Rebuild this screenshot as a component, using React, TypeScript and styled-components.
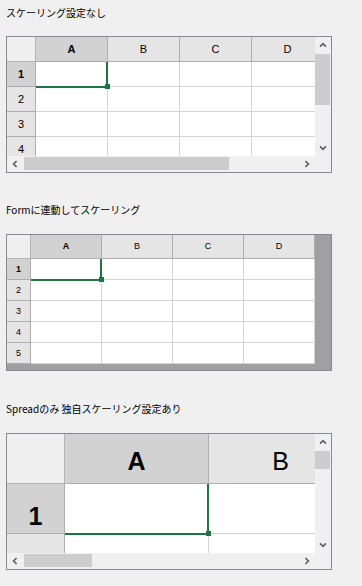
import React from 'react';
import styled, { createGlobalStyle } from 'styled-components';

const GlobalStyle = createGlobalStyle`
  html, body {
    margin: 0;
    padding: 0;
    background: #f0f0f0;
  }
  body {
    width: 362px;
    height: 586px;
    overflow: hidden;
    font-family: "Liberation Sans", "Noto Sans CJK JP", sans-serif;
  }
`;

const GREEN = '#217346';

const Page = styled.div`
  display: flex;
  flex-direction: column;
  padding-left: 6px;
  width: 326px;
`;

const Section = styled.section<{ $top: number; $gap: number }>`
  display: flex;
  flex-direction: column;
  gap: ${(p) => p.$gap}px;
  margin-top: ${(p) => p.$top}px;
`;

const Title = styled.div`
  font-family: "Noto Sans CJK JP", sans-serif;
  font-size: 10px;
  line-height: 14px;
  height: 14px;
  color: #000;
  white-space: nowrap;
`;

const Panel = styled.div<{ $scroll: boolean }>`
  display: grid;
  grid-template-columns: ${(p) => (p.$scroll ? '308px 16px' : '324px')};
  grid-template-rows: ${(p) => (p.$scroll ? '119px 16px' : '135px')};
  border: 1px solid #868a91;
  background: #f0f0f0;
`;

const Sheet = styled.div<{ $bg: string }>`
  overflow: hidden;
  background: ${(p) => p.$bg};
`;

const CellGrid = styled.div<{ $rowHead: number; $colW: number; $cols: number; $headH: number; $rowH: number }>`
  display: grid;
  grid-template-columns: ${(p) => `${p.$rowHead}px repeat(${p.$cols}, ${p.$colW}px)`};
  grid-template-rows: ${(p) => `${p.$headH}px`};
  grid-auto-rows: ${(p) => `${p.$rowH}px`};
  width: max-content;
`;

const Corner = styled.div`
  box-sizing: border-box;
  background: #efefef;
  border-right: 1px solid #b4b4b4;
  border-bottom: 1px solid #b4b4b4;
`;

const HeaderCell = styled.div<{ $selected: boolean; $size: number; $shift: number }>`
  box-sizing: border-box;
  display: flex;
  align-items: center;
  justify-content: center;
  padding-top: ${(p) => p.$shift}px;
  background: ${(p) => (p.$selected ? '#d2d2d2' : '#e5e5e5')};
  border-right: 1px solid #aeaeae;
  border-bottom: 1px solid #aeaeae;
  font-family: "Liberation Sans", sans-serif;
  font-size: ${(p) => p.$size}px;
  font-weight: ${(p) => (p.$selected ? 700 : 400)};
  color: #000;
  line-height: 1;
`;

const DataCell = styled.div`
  position: relative;
  box-sizing: border-box;
  background: #fff;
  border-right: 1px solid #d4d4d4;
  border-bottom: 1px solid #d4d4d4;
`;

const SelectionFrame = styled.div`
  position: absolute;
  z-index: 2;
  left: 0;
  top: 0;
  right: -1px;
  bottom: -2px;
  box-sizing: border-box;
  border-right: 2px solid ${GREEN};
  border-bottom: 2px solid ${GREEN};
`;

const FillHandle = styled.div`
  position: absolute;
  z-index: 3;
  right: -3px;
  bottom: -3px;
  width: 5px;
  height: 5px;
  background: ${GREEN};
`;

const VScroll = styled.div`
  display: flex;
  flex-direction: column;
  background: #f0f0f0;
`;

const HScroll = styled.div`
  display: flex;
  background: #f0f0f0;
`;

const ArrowButton = styled.div`
  flex: none;
  width: 16px;
  height: 16px;
  display: flex;
  align-items: center;
  justify-content: center;
`;

const VTrack = styled.div`
  flex: 1;
  padding: 1px 1px 0 0;
`;

const HTrack = styled.div`
  flex: 1;
  padding: 1px 0 0 1px;
`;

const Thumb = styled.div`
  background: #cdcdcd;
`;

const ScrollCorner = styled.div`
  background: #f0f0f0;
`;

type Dir = 'up' | 'down' | 'left' | 'right';
const rotation: Record<Dir, number> = { up: 0, right: 90, down: 180, left: 270 };

const Chevron = ({ dir }: { dir: Dir }) => (
  <svg width="8" height="8" viewBox="0 0 8 8" style={{ transform: `rotate(${rotation[dir]}deg)` }}>
    <path d="M1 5.6 L4 2.6 L7 5.6" fill="none" stroke="#606060" strokeWidth="1.7" />
  </svg>
);

interface SpreadConfig {
  rowHead: number;
  colW: number;
  headH: number;
  rowH: number;
  font: number;
  cols: string[];
  /** row labels; an empty string is a row scrolled out of view */
  rows: string[];
  headShift: number;
  rowShift: number;
  bg: string;
  /** scrollbar thumbs, undefined = no scrollbars */
  vThumb?: number;
  hThumb?: number;
}

const Spread = ({ cfg }: { cfg: SpreadConfig }) => {
  const scroll = cfg.vThumb !== undefined;

  return (
    <Panel $scroll={scroll}>
      <Sheet $bg={cfg.bg}>
        <CellGrid
          $rowHead={cfg.rowHead}
          $colW={cfg.colW}
          $cols={cfg.cols.length}
          $headH={cfg.headH}
          $rowH={cfg.rowH}
        >
          <Corner />
          {cfg.cols.map((c, i) => (
            <HeaderCell key={c} $selected={i === 0} $size={cfg.font} $shift={cfg.headShift}>
              {c}
            </HeaderCell>
          ))}
          {cfg.rows.map((label, r) => (
            <React.Fragment key={r}>
              <HeaderCell $selected={r === 0} $size={cfg.font} $shift={cfg.rowShift}>
                {label}
              </HeaderCell>
              {cfg.cols.map((c, i) => (
                <DataCell key={c}>
                  {r === 0 && i === 0 && (
                    <>
                      <SelectionFrame />
                      <FillHandle />
                    </>
                  )}
                </DataCell>
              ))}
            </React.Fragment>
          ))}
        </CellGrid>
      </Sheet>
      {scroll && (
        <>
          <VScroll>
            <ArrowButton>
              <Chevron dir="up" />
            </ArrowButton>
            <VTrack>
              <Thumb style={{ height: cfg.vThumb }} />
            </VTrack>
            <ArrowButton>
              <Chevron dir="down" />
            </ArrowButton>
          </VScroll>
          <HScroll>
            <ArrowButton>
              <Chevron dir="left" />
            </ArrowButton>
            <HTrack>
              <Thumb style={{ width: cfg.hThumb, height: 13 }} />
            </HTrack>
            <ArrowButton>
              <Chevron dir="right" />
            </ArrowButton>
          </HScroll>
          <ScrollCorner />
        </>
      )}
    </Panel>
  );
};

const noScaling: SpreadConfig = {
  rowHead: 29,
  colW: 72,
  headH: 25,
  rowH: 25,
  font: 11,
  cols: ['A', 'B', 'C', 'D'],
  rows: ['1', '2', '3', '4'],
  headShift: 0,
  rowShift: 0,
  bg: '#fff',
  vThumb: 51,
  hThumb: 205,
};

const formScaling: SpreadConfig = {
  rowHead: 24,
  colW: 71,
  headH: 24,
  rowH: 21,
  font: 9,
  cols: ['A', 'B', 'C', 'D'],
  rows: ['1', '2', '3', '4', '5'],
  headShift: 0,
  rowShift: 0,
  bg: '#a0a0a0',
};

const ownScaling: SpreadConfig = {
  rowHead: 58,
  colW: 144,
  headH: 50,
  rowH: 50,
  font: 25,
  cols: ['A', 'B'],
  rows: ['1', ''],
  headShift: 5,
  rowShift: 15,
  bg: '#fff',
  vThumb: 18,
  hThumb: 68,
};

const App = () => (
  <>
    <GlobalStyle />
    <Page>
      <Section $top={6} $gap={16}>
        <Title>スケーリング設定なし</Title>
        <Spread cfg={noScaling} />
      </Section>
      <Section $top={30} $gap={17}>
        <Title>Formに連動してスケーリング</Title>
        <Spread cfg={formScaling} />
      </Section>
      <Section $top={31} $gap={17}>
        <Title>Spreadのみ 独自スケーリング設定あり</Title>
        <Spread cfg={ownScaling} />
      </Section>
    </Page>
  </>
);

export default App;
